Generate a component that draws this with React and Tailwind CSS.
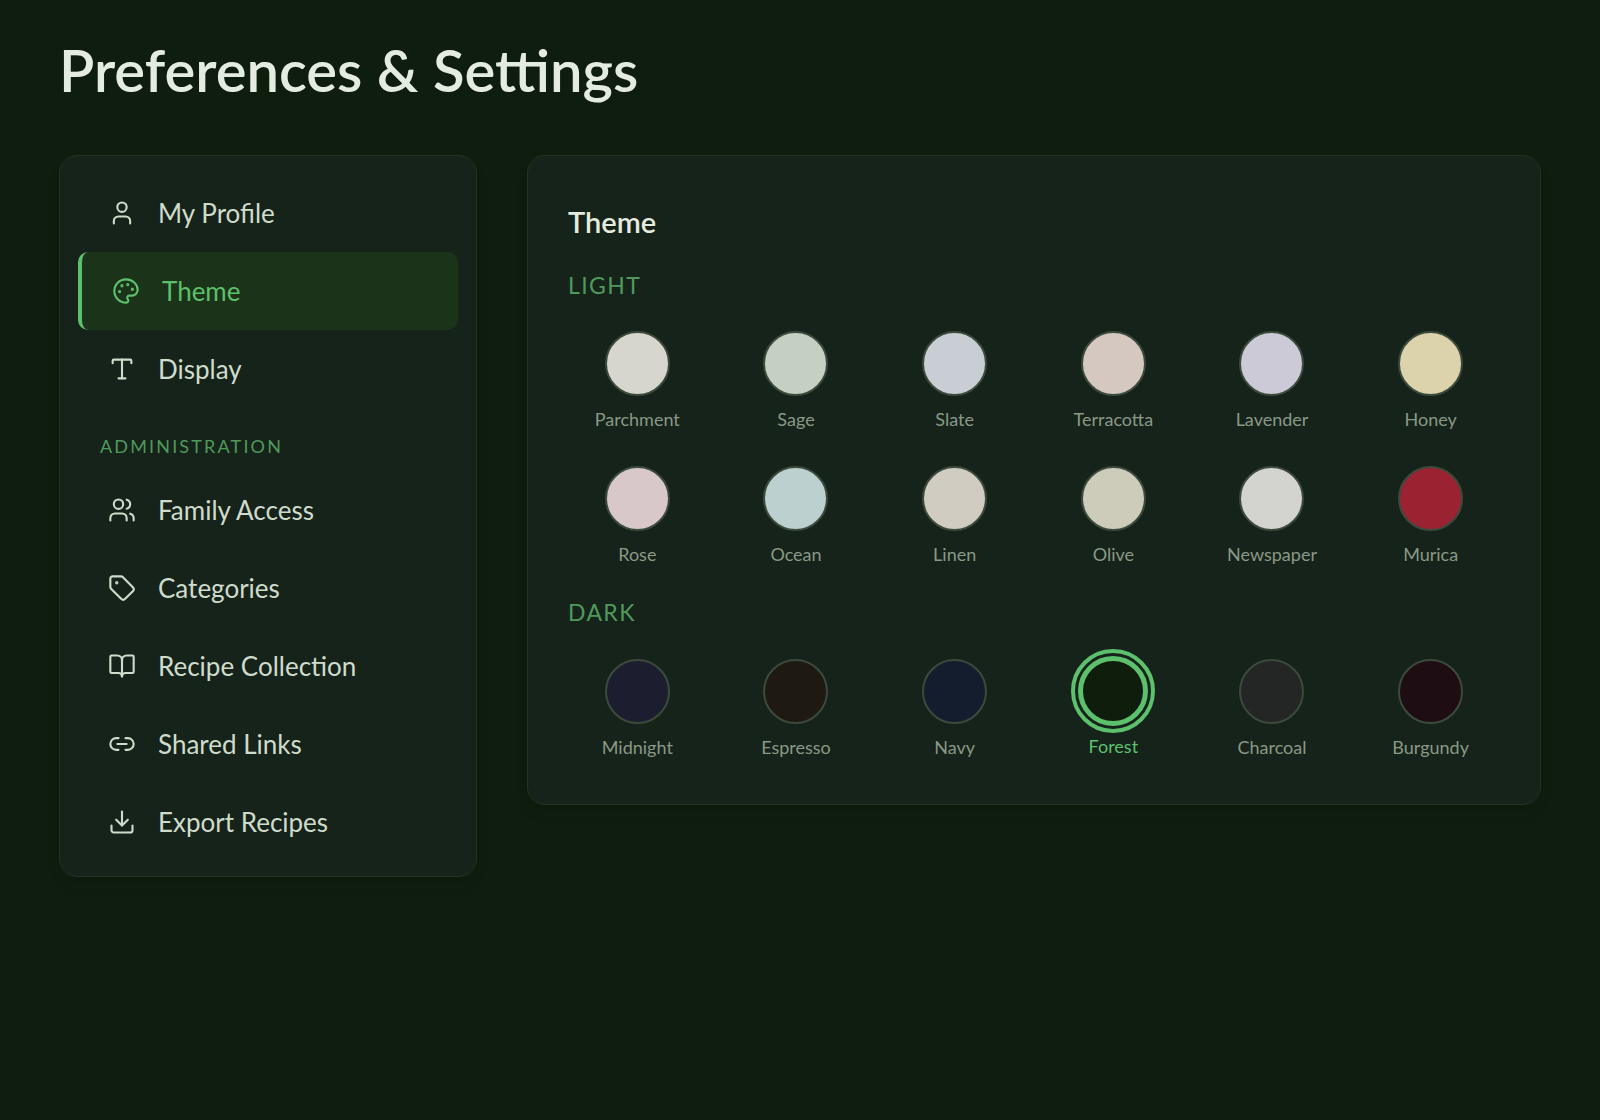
import React from "react";
import { User, Palette, Type, Users, Tag, BookOpen, Link2, Download } from "lucide-react";

const light = [
  ["Parchment", "#d6d6cf"], ["Sage", "#c5cfc4"], ["Slate", "#c9ced5"], ["Terracotta", "#d4c8c0"], ["Lavender", "#cdcad8"], ["Honey", "#dcd2ac"],
  ["Rose", "#d8c8ca"], ["Ocean", "#bdd0d0"], ["Linen", "#d1ccc2"], ["Olive", "#cdccbb"], ["Newspaper", "#d3d3cf"], ["Murica", "#9b2331"],
];
const dark = [
  ["Midnight", "#1c1d2e"], ["Espresso", "#1f1914"], ["Navy", "#131d2d"], ["Forest", "#0f1d0d"], ["Charcoal", "#232624"], ["Burgundy", "#1e0d12"],
];

function Item({ icon: Icon, label, active }) {
  return (
    <div className={"flex items-center h-[78px] rounded-[10px] pl-[30px] gap-[22px] " + (active ? "bg-[#1b3319] border-l-4 border-[#5cc06c] pl-[26px] text-[#5cc06c]" : "text-[#cfdccb]")}>
      <Icon size={28} strokeWidth={1.8} />
      <span className="text-[26px]">{label}</span>
    </div>
  );
}

function Swatch({ name, color, selected }) {
  return (
    <div className="flex flex-col items-center">
      {selected ? (
        <div className="w-[84px] h-[84px] -my-[10px] rounded-full border-4 border-[#5cc06c] p-[3px]">
          <div className="w-full h-full rounded-full border-[5px] border-[#5cc06c]" style={{ background: color }} />
        </div>
      ) : (
        <div className="w-[65px] h-[65px] rounded-full border-2 border-[#3c4a3c]" style={{ background: color }} />
      )}
      <div className={"mt-[11px] text-[18px] leading-6 " + (selected ? "text-[#5cc06c]" : "text-[#8a9886]")}>{name}</div>
    </div>
  );
}

export default function App() {
  return (
    <div className="min-h-[1120px] bg-[#0f1d0e] px-[59px] pt-[30px]" style={{ fontFamily: "Lato, 'Noto Sans', sans-serif" }}>
      <h1 className="text-[58px] font-semibold text-[#e4ecdf] leading-[80px]">Preferences &amp; Settings</h1>
      <div className="flex items-start gap-[50px] mt-[45px]">
        <div className="w-[418px] shrink-0 rounded-[18px] bg-[#16231a] border border-[#223223] shadow-lg px-[18px] pt-[18px] pb-[15px]">
          <Item icon={User} label="My Profile" />
          <Item icon={Palette} label="Theme" active />
          <Item icon={Type} label="Display" />
          <div className="mt-[28px] mb-[15px] pl-[22px] text-[18px] leading-5 tracking-[0.12em] text-[#4f9a5a]">ADMINISTRATION</div>
          <Item icon={Users} label="Family Access" />
          <Item icon={Tag} label="Categories" />
          <Item icon={BookOpen} label="Recipe Collection" />
          <Item icon={Link2} label="Shared Links" />
          <Item icon={Download} label="Export Recipes" />
        </div>
        <div className="flex-1 rounded-[18px] bg-[#16231a] border border-[#223223] shadow-lg px-10 pt-[48px] pb-[45px]">
          <h2 className="text-[29px] font-semibold leading-9 text-[#e4ecdf]">Theme</h2>
          <div className="mt-[31px] text-[23px] leading-7 tracking-[0.06em] text-[#4f9a5a]">LIGHT</div>
          <div className="grid grid-cols-6 gap-x-5 gap-y-[35px] mt-[32px]">
            {light.map(([n, c]) => <Swatch key={n} name={n} color={c} />)}
          </div>
          <div className="mt-[32px] text-[23px] leading-7 tracking-[0.06em] text-[#4f9a5a]">DARK</div>
          <div className="grid grid-cols-6 gap-x-5 mt-[33px]">
            {dark.map(([n, c]) => <Swatch key={n} name={n} color={c} selected={n === "Forest"} />)}
          </div>
        </div>
      </div>
    </div>
  );
}
